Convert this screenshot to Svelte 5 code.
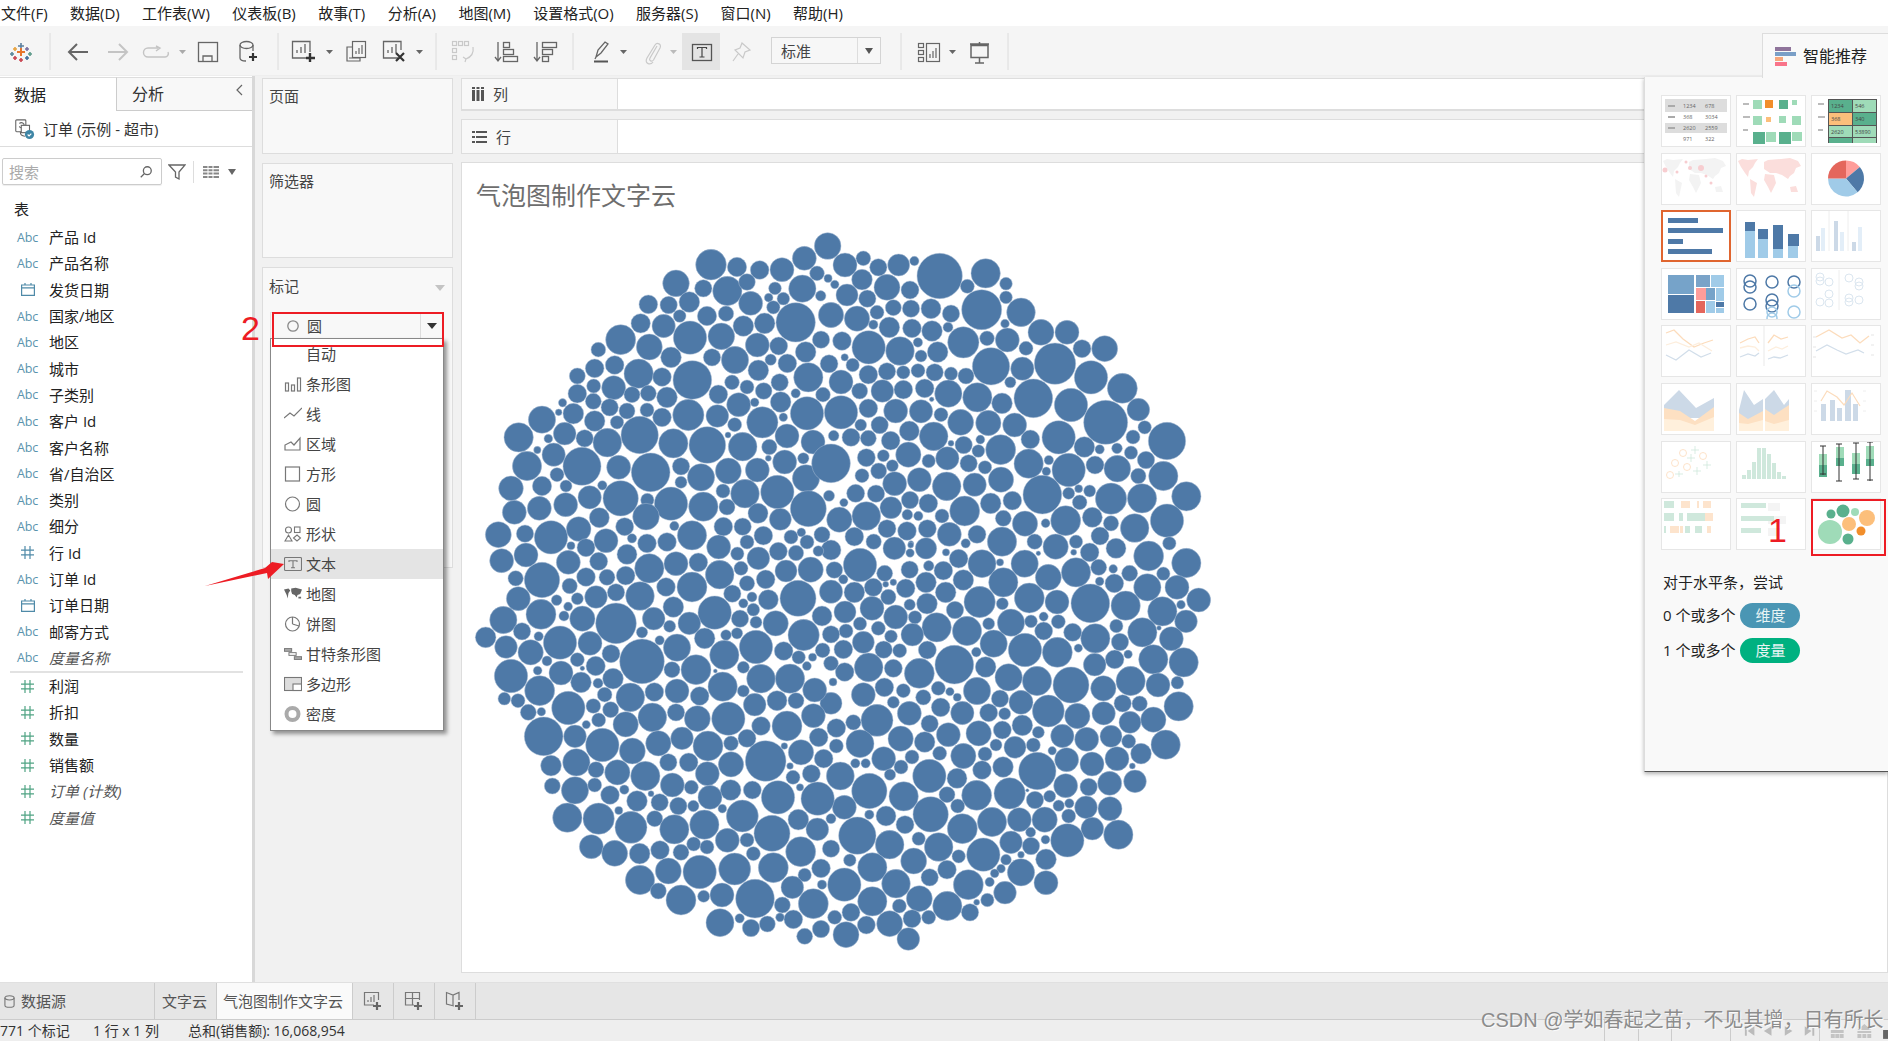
<script>
  const menus = ['文件(F)','数据(D)','工作表(W)','仪表板(B)','故事(T)','分析(A)','地图(M)','设置格式(O)','服务器(S)','窗口(N)','帮助(H)'];
  const fields = [
    ['abc','产品 Id'],['abc','产品名称'],['date','发货日期'],['abc','国家/地区'],['abc','地区'],['abc','城市'],['abc','子类别'],['abc','客户 Id'],['abc','客户名称'],['abc','省/自治区'],['abc','类别'],['abc','细分'],['num','行 Id'],['abc','订单 Id'],['date','订单日期'],['abc','邮寄方式'],['abc','度量名称',true]
  ];
  const measures = [['利润'],['折扣'],['数量'],['销售额'],['订单 (计数)',true],['度量值',true]];

  const worldA = 'M2 8L6 6L12 7L22 6L19 10L17 14L13 18L12 24L9 20L5 14Z M14 26L21 30L18 44L15 40Z M28 9L32 7L45 6L54 5L62 8L65 13L60 15L58 20L54 23L52 26L46 22L40 20L34 20L28 16Z M29 21L38 22L40 30L35 40L32 34L28 27Z M54 34L60 33L62 39L55 39Z';

  const A = [[720,134,46],[798,141,29],[866,150,28],[933,149,36],[1000,115,36],[1070,78,40],[615,190,40],[697,205,26],[769,213,44],[828,186,25],[994,206,41],[1038,160,22],[912,205,19],[937,236,19],[893,233,13],[907,262,20],[839,250,36],[532,253,28],[593,255,26],[655,246,31],[708,288,29],[765,281,23],[626,288,19],[974,307,59],[817,318,31],[881,310,31],[1050,359,26],[509,310,29],[578,318,35],[657,353,50],[751,349,40],[859,375,36],[923,378,27],[1004,396,31],[449,359,45],[535,381,39],[600,412,31],[723,412,26],[792,420,41],[382,389,22],[431,435,28],[899,419,17],[949,430,28],[371,445,28],[503,461,44],[573,471,28],[664,480,58],[783,487,22],[862,451,31],[1012,472,44],[319,468,24],[368,498,21],[428,503,36],[828,501,21],[926,487,26],[319,521,28],[367,544,24],[483,524,24],[532,520,24],[588,532,31],[742,523,28],[878,513,25],[974,520,14],[1056,524,22],[929,546,31],[803,554,36],[851,547,13],[416,562,26],[468,573,24],[528,570,21],[1008,580,50],[213,599,41],[263,577,10],[307,581,31],[371,603,31],[573,592,28],[652,585,47],[739,588,34],[874,607,47],[791,614,21],[438,607,20],[143,652,44],[281,641,34],[232,656,13],[341,655,26],[409,668,43],[506,645,56],[607,670,44],[709,675,55],[771,645,9],[948,648,36],[1026,666,36],[815,680,43],[199,690,11],[248,704,35],[895,681,23],[168,738,44],[333,739,57],[258,764,21],[443,742,36],[539,757,58],[630,739,26],[892,715,9],[997,715,17],[941,726,36],[772,753,39],[859,750,36],[690,772,41],[1005,775,41],[120,805,37],[213,798,29],[285,798,18],[394,796,14],[630,787,18],[356,832,35],[449,835,53],[756,813,21],[822,821,43],[919,816,50],[130,877,36],[205,865,36],[284,854,36],[529,840,20],[600,851,50],[697,860,44],[768,861,24],[1012,866,54],[385,893,30],[525,890,40],[861,880,30],[928,898,33]];
  const B = [[326,153,68],[464,145,44],[42,120,36],[97,100,22],[142,127,26],[203,120,33],[250,108,14],[0,62,28],[93,164,31],[168,187,39],[237,195,27],[409,184,21],[525,176,19],[525,217,19],[48,210,33],[109,221,26],[452,254,60],[570,262,43],[187,248,24],[240,251,26],[300,251,30],[360,266,26],[138,262,21],[78,281,38],[127,299,14],[0,270,38],[175,307,31],[243,310,28],[303,318,31],[351,307,15],[522,296,13],[630,322,39],[708,322,36],[33,348,28],[113,367,50],[207,378,43],[397,352,47],[468,340,22],[529,345,36],[585,370,21],[753,371,27],[821,371,39],[672,416,62],[480,424,56],[320,381,31],[270,393,18],[41,397,11],[574,431,35],[780,457,50],[874,490,45],[65,420,20],[112,449,28],[168,439,26],[217,442,20],[261,437,21],[311,442,26],[360,446,20],[405,453,24],[30,471,36],[86,498,24],[154,498,34],[217,494,28],[281,490,28],[352,506,41],[439,517,44],[513,535,31],[607,520,58],[720,540,50],[824,592,66],[922,554,34],[30,562,50],[112,550,28],[194,558,36],[270,559,35],[330,569,21],[302,523,7],[389,592,39],[472,594,38],[551,600,36],[941,607,20],[1008,648,56],[146,600,26],[60,637,27],[112,640,24],[235,618,30],[308,634,43],[179,647,28],[8,632,16],[683,637,50],[598,643,28],[906,636,21],[398,660,26],[360,655,9],[509,674,45],[442,678,19],[760,666,31],[806,673,14],[858,670,16],[900,683,20],[945,705,26],[0,715,58],[106,698,27],[157,692,18],[232,689,38],[293,708,20],[349,700,35],[413,715,26],[593,716,44],[713,735,50],[792,720,27],[859,731,40],[922,753,23],[997,753,44],[143,738,24],[184,722,18],[93,752,21],[462,727,20],[646,739,13],[191,776,36],[265,764,36],[347,784,43],[431,779,35],[510,764,38],[634,809,58],[713,805,18],[743,791,12],[776,798,18],[840,821,47],[933,820,44],[1066,814,44],[74,805,27],[135,806,26],[0,812,40],[237,825,26],[292,835,28],[479,835,31],[544,827,28],[746,832,22],[180,848,33],[106,873,43],[401,858,45],[517,880,24],[582,896,38],[704,887,45],[784,877,30],[840,895,23],[911,909,43],[1008,887,50],[25,884,38],[229,869,16],[262,873,14],[333,873,21],[168,911,27],[228,918,28],[289,911,27],[355,928,36],[438,928,27],[513,950,44],[70,935,28],[128,950,23],[611,950,23],[807,933,27],[735,950,20],[674,965,38],[855,970,30],[1015,955,20],[190,970,34],[285,970,32],[404,955,14],[240,955,8]];
  const C = [[82,44,39],[162,41,26],[240,52,50],[323,27,37],[386,0,28],[461,20,27],[526,8,35],[610,18,14],[663,46,44],[757,20,28],[815,20,26],[877,47,28],[930,10,35],[1015,0,40],[405,62,36],[345,83,27],[483,55,14],[528,70,28],[588,66,28],[743,81,36],[828,66,21],[960,51,21],[991,37,13],[1008,66,21],[1053,44,24],[92,122,36],[165,105,36],[292,127,36],[383,124,27],[468,103,30],[535,145,44],[615,131,36],[682,127,28],[799,101,20],[862,115,34],[922,94,27],[975,99,23],[1042,93,16],[1095,88,33],[134,175,23],[213,180,53],[345,171,28],[408,172,24],[464,167,28],[746,164,43],[810,145,21],[945,153,33],[1019,149,38],[1085,148,24],[296,198,23],[585,201,28],[663,201,45],[828,190,23],[884,178,28],[142,236,36],[375,231,34],[435,217,26],[507,228,43],[784,221,26],[319,236,18],[981,235,54],[1077,217,38],[892,239,30],[843,231,15],[817,250,14],[210,283,45],[334,296,38],[607,261,31],[731,278,50],[847,269,19],[1053,288,30],[97,300,41],[435,310,61],[548,296,34],[807,296,26],[655,310,34],[855,307,18],[596,319,18],[914,310,38],[153,334,26],[998,345,47],[1077,345,27],[44,352,31],[513,337,17],[203,349,14],[267,368,50],[701,355,31],[765,345,16],[798,340,17],[105,381,34],[357,370,36],[566,361,14],[618,383,41],[855,381,50],[938,393,28],[179,397,38],[420,401,27],[760,405,44],[513,424,67],[1049,424,44],[983,412,20],[228,423,15],[319,419,21],[603,449,24],[675,449,45],[817,442,18],[120,468,50],[374,438,29],[270,459,36],[334,445,7],[733,453,6],[426,476,31],[870,476,43],[957,476,44],[330,487,31],[381,490,15],[755,500,44],[206,512,45],[401,524,22],[478,532,43],[550,516,28],[618,513,36],[686,528,28],[817,513,18],[1031,510,36],[1080,487,17],[918,542,30],[975,542,24],[100,536,19],[141,542,21],[292,564,50],[367,558,22],[851,554,34],[419,569,24],[615,577,26],[544,592,43],[679,596,39],[772,596,50],[1027,587,36],[172,577,24],[383,600,21],[464,613,38],[870,618,28],[948,618,45],[218,649,58],[312,649,34],[394,675,50],[633,655,34],[562,670,38],[828,655,27],[1043,652,28],[711,678,45],[780,670,22],[484,693,39],[884,723,61],[940,678,10],[990,697,38],[1058,716,28],[240,737,31],[316,727,41],[780,733,38],[592,727,26],[653,727,28],[375,749,24],[439,757,38],[709,761,36],[957,738,10],[523,768,44],[966,772,21],[1021,761,27],[604,795,36],[244,798,24],[312,811,41],[371,795,21],[661,802,21],[779,810,31],[844,810,27],[987,802,11],[921,832,50],[1040,836,50],[417,825,28],[460,809,14],[717,832,36],[540,821,9],[498,843,31],[566,847,26],[622,858,26],[667,858,17],[754,866,13],[814,888,48],[289,893,44],[383,896,47],[551,896,24],[982,899,31],[1080,895,17],[700,914,44],[480,922,48],[610,928,44],[903,940,54],[1039,928,34],[769,961,36],[828,960,21],[361,980,36],[431,1000,39],[506,1001,31],[567,990,28],[630,997,24],[668,972,21],[708,981,21],[847,1001,21],[989,995,45],[1076,984,31],[592,1053,39],[686,1056,50],[791,1047,48],[907,1043,45],[1001,1065,20],[1050,1045,28],[507,1080,44],[562,1113,24],[630,1140,45],[698,1129,18],[753,1125,36],[852,1136,58],[964,1102,34],[1053,1094,14],[934,1155,24],[1027,1151,45],[747,1208,42],[806,1195,14],[840,1224,26],[889,1212,24],[927,1192,13],[967,1198,28],[1050,1227,26],[1089,1192,23],[1001,1249,24]];
  const D = [[87,75,50],[190,37,43],[289,37,43],[0,30,30],[72,0,26],[127,10,24],[239,15,9],[345,37,11],[404,14,15],[355,0,30],[437,0,20],[383,56,28],[453,71,42],[513,15,45],[507,67,11],[581,71,41],[622,40,7],[611,8,27],[675,30,42],[735,8,20],[728,37,9],[776,37,28],[803,82,24],[857,40,44],[953,48,45],[1016,18,21],[1066,69,44],[10,90,25],[161,100,24],[236,89,26],[337,92,28],[397,120,31],[517,127,44],[652,112,39],[735,97,44],[896,100,24],[997,101,20],[37,118,14],[850,130,28],[806,124,13],[949,142,41],[1038,142,36],[127,142,27],[70,157,31],[164,133,9],[187,127,10],[224,145,28],[285,127,31],[344,157,31],[0,155,35],[446,186,47],[595,174,45],[678,186,36],[778,190,58],[884,197,44],[1103,180,36],[172,171,23],[236,194,17],[288,191,31],[514,191,18],[994,214,44],[1050,194,13],[123,205,36],[42,216,33],[372,210,26],[194,231,36],[252,232,20],[540,248,41],[600,244,19],[682,245,21],[1065,244,34],[317,262,44],[408,273,44],[473,251,18],[87,251,20],[856,258,20],[45,273,21],[142,265,21],[638,273,27],[725,277,27],[793,295,44],[934,277,44],[984,264,7],[0,283,26],[244,284,34],[180,289,19],[1021,296,36],[97,307,33],[488,311,41],[582,330,50],[679,337,45],[867,306,26],[37,328,28],[158,329,26],[206,332,21],[289,330,27],[370,374,58],[851,358,28],[967,358,44],[1058,367,44],[791,374,34],[113,382,43],[187,385,27],[265,400,45],[464,381,31],[41,396,28],[0,370,22],[533,412,41],[618,423,44],[720,435,54],[899,423,44],[817,445,38],[981,435,36],[1039,428,19],[160,442,28],[217,452,21],[322,445,21],[438,453,41],[6,426,12],[97,464,36],[277,472,23],[507,476,26],[570,487,36],[875,490,26],[926,491,23],[1043,499,44],[0,490,33],[187,487,18],[329,502,28],[652,513,48],[394,519,35],[473,518,27],[521,521,18],[739,528,38],[818,520,35],[138,541,48],[235,520,36],[67,547,23],[897,547,33],[967,539,38],[296,551,26],[574,556,31],[16,564,28],[514,570,27],[352,584,36],[443,580,38],[622,577,18],[694,588,35],[767,598,36],[840,589,33],[893,604,21],[1004,614,44],[87,611,42],[209,596,38],[281,606,31],[495,615,18],[552,622,33],[607,615,21],[16,618,21],[930,641,31],[326,640,21],[397,648,38],[462,642,21],[158,656,36],[243,651,21],[707,659,36],[783,672,36],[858,656,36],[73,670,14],[104,670,14],[210,681,21],[516,681,31],[453,690,28],[619,693,56],[295,708,50],[177,704,17],[904,678,9],[28,708,42],[378,715,30],[912,724,34],[836,730,36],[115,753,53],[704,737,36],[773,741,26],[218,769,44],[348,764,24],[437,766,45],[536,760,47],[589,751,5],[612,780,26],[656,769,18],[40,802,36],[765,802,34],[837,806,36],[683,797,17],[715,790,14],[380,798,21],[299,823,53],[115,824,14],[165,828,30],[0,836,15],[713,828,21],[565,839,36],[641,839,38],[394,866,45],[483,846,44],[222,854,27],[79,887,56],[599,877,15],[784,866,34],[862,884,44],[709,901,50],[176,914,43],[263,896,20],[323,921,43],[457,944,50],[540,907,34],[600,918,26],[0,926,26],[248,963,39],[383,949,20],[570,944,10],[124,982,44],[645,958,31],[525,959,16],[348,989,28],[510,986,13],[491,1000,13],[570,997,41],[40,1034,50],[195,1031,43],[296,1012,26],[412,1034,45],[476,1026,14],[645,1028,36],[522,1058,34],[124,1084,44],[265,1076,39],[205,1098,21],[349,1098,44],[437,1087,9],[469,1080,20],[417,1117,26],[60,1117,27],[11,1132,21],[293,1132,21],[243,1136,27],[176,1151,39],[106,1155,27],[45,1184,39],[232,1197,34]];

  const bubbles = [];
  function add(list, ox, oy) {
    for (const [x, y, r] of list) {
      const c = { x: ox + x / 3, y: oy + y / 3, r: r / 3 };
      let ok = true;
      for (const b of bubbles) {
        if (Math.hypot(b.x - c.x, b.y - c.y) < b.r + c.r - 4) { ok = false; break; }
      }
      if (ok) bubbles.push(c);
    }
  }
  add(A, 470, 220); add(B, 830, 225); add(D, 830, 540); add(C, 470, 520);
  let seed = 771;
  const rnd = () => { seed = (seed + 0x6d2b79f5) | 0; let t = Math.imul(seed ^ (seed >>> 15), 1 | seed); t = (t + Math.imul(t ^ (t >>> 7), 61 | t)) ^ t; return ((t ^ (t >>> 14)) >>> 0) / 4294967296; };
  for (let i = 0; i < 9000; i++) {
    const a = rnd() * Math.PI * 2, d = Math.sqrt(rnd()) * 340;
    const x = 842 + Math.cos(a) * d, y = 592 + Math.sin(a) * d;
    let free = 99;
    for (const b of bubbles) { free = Math.min(free, Math.hypot(b.x - x, b.y - y) - b.r - 0.8); if (free < 4) break; }
    if (free >= 4) bubbles.push({ x, y, r: Math.min(free, 14) });
  }
</script>

<div class="app">
  <nav class="menu">{#each menus as m}<span>{m}</span>{/each}</nav>

  <div class="toolbar">
    <svg class="strip1" viewBox="0 26 771 50" width="771" height="50" fill="none">
      <g stroke-width="1.6">
        <path d="M21 43v6M18 46h6" stroke="#5a7f9f"/><path d="M15 47v4M13 49h4" stroke="#e8a23d"/><path d="M27 47v4M25 49h4" stroke="#7a6fa0"/>
        <path d="M21 48v8M17 52h8" stroke="#e8762d" stroke-width="2"/>
        <path d="M12 52v4M10 54h4" stroke="#59879b"/><path d="M30 52v4M28 54h4" stroke="#5d9a8a"/>
        <path d="M15 56v4M13 58h4" stroke="#c9434f"/><path d="M27 56v4M25 58h4" stroke="#3f6f9d"/><path d="M21 58v4M19 60h4" stroke="#c9434f"/>
      </g>
      <path d="M50 33v37M278 33v37M436 33v37M573 33v37" stroke="#dcdcdc"/>
      <path d="M88 52H69M77 44l-8 8 8 8" stroke="#666" stroke-width="2"/>
      <path d="M108 52h19M119 44l8 8-8 8" stroke="#c4c4c4" stroke-width="2"/>
      <path d="M158 48h-10a3.500 3.500 0 0 0 0 9h17a3.500 3.500 0 0 0 3-5M156 46l4 2-4 3" stroke="#c4c4c4" stroke-width="1.400"/>
      <path d="M179 50h7l-3.500 4z" fill="#aaa"/>
      <rect x="198.500" y="42.500" width="19" height="19" stroke="#666" stroke-width="1.300"/><path d="M203 61v-5h9v5" stroke="#666" stroke-width="1.300"/>
      <path d="M240 45v13c0 2 2 3 6 3M253 45v6" stroke="#666" stroke-width="1.300"/><ellipse cx="246.500" cy="45" rx="6.500" ry="3.500" stroke="#666" stroke-width="1.300"/><path d="M253 53v8M249 57h8" stroke="#333" stroke-width="2.200"/>
      <path d="M307 58H292.500V41.500H310V52" stroke="#666" stroke-width="1.300"/><path d="M297 53v-3M301 53v-6M305 53v-9" stroke="#666" stroke-width="1.300"/><path d="M310 53v9M306 58h9" stroke="#333" stroke-width="2.400"/>
      <path d="M326 50h7l-3.500 4z" fill="#666"/>
      <rect x="352.500" y="41.500" width="13" height="16" stroke="#666" stroke-width="1.200" fill="#f5f5f5"/><path d="M356 54v-3M359 54v-6M362 54v-9" stroke="#666" stroke-width="1.200"/><path d="M352 47h-5v14h13v-3M349 58h11" stroke="#666" stroke-width="1.200"/>
      <path d="M398 58H383.500V41.500H401V50" stroke="#666" stroke-width="1.300"/><path d="M388 53v-3M392 53v-6M396 53v-9" stroke="#666" stroke-width="1.300"/><path d="M396 53l8 8M404 53l-8 8" stroke="#333" stroke-width="2.200"/>
      <path d="M416 50h7l-3.500 4z" fill="#666"/>
      <g stroke="#c9c9c9" stroke-width="1.200"><rect x="452.500" y="41.500" width="4" height="4"/><rect x="458.500" y="41.500" width="4" height="4"/><rect x="464.500" y="41.500" width="4" height="4"/><rect x="452.500" y="48.500" width="4" height="4"/><rect x="452.500" y="55.500" width="4" height="4"/><path d="M473 47c1 6-2 10-7 12M463 57l3 2-1 3"/></g>
      <path d="M498 42v19M495 57l3 4 3-4" stroke="#666" stroke-width="1.300"/><g stroke="#666" stroke-width="1.300"><rect x="503.500" y="42.500" width="6" height="5"/><rect x="503.500" y="49.500" width="10" height="5"/><rect x="503.500" y="56.500" width="14" height="5"/></g>
      <path d="M537 42v19M534 57l3 4 3-4" stroke="#666" stroke-width="1.300"/><g stroke="#666" stroke-width="1.300"><rect x="542.500" y="42.500" width="14" height="5"/><rect x="542.500" y="49.500" width="10" height="5"/><rect x="542.500" y="56.500" width="6" height="5"/></g>
      <path d="M596 57l2-7 7-8 3 2-7 9zM596 57l-1 2" stroke="#666" stroke-width="1.300"/><path d="M594 61.500h14" stroke="#555" stroke-width="2"/>
      <path d="M620 50h7l-3.500 4z" fill="#666"/>
      <path d="M657 46L650 58c-1.500 3 2 4 3.500 2L660 48c2-4-3-6-5-3L647 58c-3 5 3 8 6 4" stroke="#c9c9c9" stroke-width="1.200"/>
      <path d="M670 50h7l-3.500 4z" fill="#bbb"/>
      <rect x="682" y="33" width="38" height="37" fill="#e4e4e4"/>
      <rect x="692.500" y="44.500" width="19" height="16" stroke="#555" stroke-width="1.300"/>
      <path d="M697.500 49v-1.500h9V49M702 48v9M699.500 57h5" stroke="#444" stroke-width="1.200"/>
      <path d="M742 43l8 7-5 2-2 6-8-8 5-2zM738 54l-5 7" stroke="#c9c9c9" stroke-width="1.200"/>
    </svg>
    <div class="fit"><span>标准</span><i></i></div>
    <svg class="strip2" viewBox="881 26 140 50" width="140" height="50" fill="none">
      <path d="M901 33v37M1008 33v37" stroke="#dcdcdc"/>
      <g stroke="#666" stroke-width="1.200"><rect x="918.500" y="43.500" width="5" height="4"/><rect x="918.500" y="50.500" width="5" height="4"/><rect x="918.500" y="57.500" width="5" height="4"/><rect x="926.500" y="43.500" width="13" height="18"/><path d="M930 58v-4M933 58v-7M936 58v-10"/></g>
      <path d="M949 50h7l-3.500 4z" fill="#666"/>
      <path d="M970 44h19M971 45.500h17v12h-17zM979.500 42v2M979.500 57.500v5M975 63h9" stroke="#666" stroke-width="1.500"/>
    </svg>
  </div>

  <main class="main">
    <section class="data">
      <div class="dtabs"><span class="on">数据</span><span class="off">分析<svg viewBox="0 0 8 12" width="8" height="12" fill="none" stroke="#666" stroke-width="1.200"><path d="M7 1L2 6l5 5"/></svg></span></div>
      <div class="source">
        <svg viewBox="0 0 24 24" width="22" height="22" fill="none" stroke="#666" stroke-width="1.200"><rect x="3" y="2" width="11" height="13" rx="1"/><path d="M7 6a3 3 0 0 1 5 3c0 3-5 2-5 0M8 15c0 4 2 4 5 5"/><rect x="9" y="8" width="9" height="8" fill="#fff"/><circle cx="18" cy="18" r="5" fill="#3f86a6" stroke="none"/><path d="M16 18l1.500 1.500L20 17" stroke="#fff"/></svg>
        <span>订单 (示例 - 超市)</span>
      </div>
      <div class="searchrow">
        <div class="search"><span>搜索</span>
          <svg viewBox="0 0 16 16" width="14" height="14" fill="none" stroke="#666" stroke-width="1.500"><circle cx="9.500" cy="6.500" r="4.500"/><path d="M6 10l-4 4"/></svg>
        </div>
        <svg class="filt" viewBox="0 0 18 18" width="18" height="18" fill="none" stroke="#666" stroke-width="1.300"><path d="M1 2h16L11 9v7L7.500 14V9z"/></svg>
        <span class="vsep"></span>
        <svg class="gridic" viewBox="0 0 16 12" width="16" height="12" fill="#888"><path d="M0 0h16v2H0zM0 3.300h16v2H0zM0 6.600h16v2H0zM0 10h16v2H0z"/><path d="M4.500 0h1v12h-1zM9.500 0h1v12h-1z" fill="#fff"/></svg>
        <span class="caret"></span>
      </div>
      <div class="tbl">表</div>
      <ul class="list">
        {#each fields as f}
          <li class:cal={f[2]}>
            <span class="ic">
              {#if f[0] === 'abc'}<em>Abc</em>
              {:else if f[0] === 'date'}<svg viewBox="0 0 14 13" width="14" height="13" fill="none" stroke="#4f8aa8" stroke-width="1.200"><path d="M.6 2h12.800v10.400H.6zM.6 4.800h12.800M4 0v2.500M10 0v2.500"/></svg>
              {:else}<svg viewBox="0 0 13 13" width="13" height="13" fill="none" stroke="#4f8aa8" stroke-width="1.200"><path d="M4 0v13M9 0v13M0 4.200h13M0 8.800h13"/></svg>{/if}
            </span>
            <span>{f[1]}</span>
          </li>
        {/each}
      </ul>
      <div class="hsep"></div>
      <ul class="list">
        {#each measures as m}
          <li class:cal={m[1]}>
            <span class="ic"><svg viewBox="0 0 13 13" width="13" height="13" fill="none" stroke="#4fa383" stroke-width="1.200"><path d="M4 0v13M9 0v13M0 4.200h13M0 8.800h13"/></svg></span>
            <span>{m[0]}</span>
          </li>
        {/each}
      </ul>
    </section>

    <section class="cards">
      <div class="card pages">页面</div>
      <div class="card filters">筛选器</div>
      <div class="card marks">
        <div class="mhead">标记<span class="mcaret"></span></div>
        <div class="select">
          <svg viewBox="0 0 14 14" width="14" height="14" fill="none" stroke="#888" stroke-width="1.300"><circle cx="7" cy="7" r="5.200"/></svg>
          <span>圆</span>
          <i></i>
        </div>
        <div class="dd">
          <div class="it"><span class="mi"></span>自动</div>
          <div class="it"><svg class="mi" viewBox="0 0 18 14" fill="none" stroke="#777" stroke-width="1.200"><rect x="1.500" y="6" width="3" height="8"/><rect x="7.500" y="8" width="3" height="6"/><rect x="13.500" y="1" width="3" height="13"/></svg>条形图</div>
          <div class="it"><svg class="mi" viewBox="0 0 18 14" fill="none" stroke="#777" stroke-width="1.200"><path d="M0 11l6-5 4 3 8-8"/></svg>线</div>
          <div class="it"><svg class="mi" viewBox="0 0 18 14" fill="none" stroke="#777" stroke-width="1.200"><path d="M1 13V8l6-3 3 3 6-7v12z"/></svg>区域</div>
          <div class="it"><svg class="mi" viewBox="0 0 18 16" fill="none" stroke="#777" stroke-width="1.200"><rect x="1.500" y="1" width="14" height="14"/></svg>方形</div>
          <div class="it"><svg class="mi" viewBox="0 0 18 16" fill="none" stroke="#777" stroke-width="1.200"><circle cx="8.500" cy="8" r="7"/></svg>圆</div>
          <div class="it"><svg class="mi" viewBox="0 0 18 16" fill="none" stroke="#777" stroke-width="1.100"><circle cx="4.500" cy="4" r="3"/><rect x="10.500" y="1" width="5.500" height="5.500"/><path d="M1 15l3.500-6 3.500 6zM13 9l3.500 3-3.500 3-3.500-3z"/></svg>形状</div>
          <div class="it hov"><svg class="mi" viewBox="0 0 18 14" fill="none" stroke="#777" stroke-width="1.100"><rect x=".5" y=".5" width="17" height="13" rx="1"/><path d="M5 5V3.700h8V5M9 3.700v7M7 10.700h4"/></svg>文本</div>
          <div class="it"><svg class="mi" viewBox="0 0 20 14" fill="#666"><path d="M0 2l5-1 2 2-2 3-1 6-1-4zM8 1l5-1 7 2-2 5-3 1-1 3-2-3-3-1-1-3zM16 10h3v2h-3z"/></svg>地图</div>
          <div class="it"><svg class="mi" viewBox="0 0 18 16" fill="none" stroke="#777" stroke-width="1.200"><circle cx="8.500" cy="8" r="7"/><path d="M8.500 8V1M8.500 8l6.500 2"/></svg>饼图</div>
          <div class="it"><svg class="mi" viewBox="0 0 20 14" fill="none" stroke="#777" stroke-width="1.100"><rect x=".5" y="1" width="8" height="3" fill="#aaa"/><rect x="5.500" y="5.500" width="8" height="3"/><rect x="11.500" y="10" width="8" height="3" fill="#aaa"/></svg>甘特条形图</div>
          <div class="it"><svg class="mi" viewBox="0 0 18 14" fill="#ddd" stroke="#777" stroke-width="1.100"><rect x=".5" y=".5" width="17" height="13"/><rect x="9" y="7" width="8.500" height="6.500" fill="#fff"/></svg>多边形</div>
          <div class="it"><svg class="mi" viewBox="0 0 18 16" fill="none"><circle cx="8.500" cy="8" r="6" stroke="#aaa" stroke-width="4"/></svg>密度</div>
        </div>
      </div>
    </section>

    <section class="work">
      <div class="shelf col">
        <div class="slabel"><svg viewBox="0 0 12 14" width="12" height="14" fill="#555"><path d="M0 0h3v2H0zM4.500 0h3v2h-3zM9 0h3v2H9zM0 3h3v11H0zM4.500 3h3v11h-3zM9 3h3v11H9z"/></svg>列</div>
      </div>
      <div class="shelf row">
        <div class="slabel"><svg viewBox="0 0 15 12" width="15" height="12" fill="#555"><path d="M0 0h3v2H0zM4 0h11v2H4zM0 5h3v2H0zM4 5h11v2H4zM0 10h3v2H0zM4 10h11v2H4z"/></svg>行</div>
      </div>
      <div class="viz">
        <h1>气泡图制作文字云</h1>
        <svg class="plot" viewBox="461 212 1427 758" width="1427" height="758">
          {#each bubbles as b}<circle cx={b.x} cy={b.y} r={b.r} fill="#4e79a7" stroke="#a9bdd4" stroke-width=".5" />{/each}
        </svg>
      </div>
    </section>
  </main>

  <div class="tabs">
    <div class="tsrc"><svg viewBox="0 0 12 14" width="11" height="13" fill="none" stroke="#777" stroke-width="1.200"><ellipse cx="6" cy="3" rx="5" ry="2.300"/><path d="M1 3v8c0 1.500 2 2.300 5 2.300s5-.8 5-2.300V3"/></svg>数据源</div>
    <div class="tab">文字云</div>
    <div class="tab active">气泡图制作文字云</div>
    <div class="tbtn"><svg viewBox="0 0 20 20" width="20" height="20" fill="none" stroke="#777" stroke-width="1.200"><path d="M11 14H1.500V1.500h14V9M5 11V9M8 11V6M11 11V4"/><path d="M14 11v8M10 15h8" stroke="#666" stroke-width="2.200"/></svg></div>
    <div class="tbtn"><svg viewBox="0 0 20 20" width="20" height="20" fill="none" stroke="#777" stroke-width="1.200"><path d="M10 14H1.500V1.500h14V9M1.500 7.500h14M8.500 1.500V14"/><path d="M14 11v8M10 15h8" stroke="#666" stroke-width="2.200"/></svg></div>
    <div class="tbtn"><svg viewBox="0 0 20 20" width="20" height="20" fill="none" stroke="#777" stroke-width="1.200"><path d="M9 15L1.500 13V1.500L8 4l6-2.500V9M8 4v10"/><path d="M14 11v8M10 15h8" stroke="#666" stroke-width="2.200"/></svg></div>
  </div>

  <footer class="status">
    <span class="s1">771 个标记</span>
    <span class="s2">1 行 x 1 列</span>
    <span class="s3">总和(销售额): 16,068,954</span>
    <div class="sright">
      <i class="c34"></i><i class="c33"></i><i class="c59"></i>
      <i class="c89"><svg viewBox="0 0 80 14" width="80" height="14" fill="#bbb"><path d="M2 2h2v10H2zM12 2v10L5 7zM30 2v10l-8-5zM44 2l8 5-8 5zM65 2l7 5-7 5zM73 2h2v10h-2z"/></svg></i>
      <i class="c69"><svg viewBox="0 0 69 16" width="69" height="16" fill="#c4c4c4"><path d="M11 7h13v3H11zM11 11h4v4h-4zM15.500 11h4v4h-4zM20 11h4v4h-4zM38 7l7-6 7 6zM38 8h14v2H38zM38 11h4v4h-4zM43 11h4v4h-4zM48 11h4v4h-4z"/><path d="M64 7h5v9h-5z" fill="#666"/></svg></i>
    </div>
  </footer>

  <aside class="rtab">
    <svg viewBox="0 0 21 19" width="21" height="19"><rect width="16" height="4" fill="#8f749b"/><rect y="5" width="21" height="4" fill="#7a9fc7"/><rect y="10" width="8" height="4" fill="#f6a67c"/><rect y="15" width="12" height="4" fill="#f9748a"/></svg>
    智能推荐
  </aside>
  <aside class="rpanel">
    <div class="grid">
      <svg class="t" viewBox="0 0 70 52"><rect x="4" y="4" width="62" height="13" fill="#ddd"/><rect x="4" y="28" width="62" height="10" fill="#ddd"/><g fill="#aaa"><rect x="7" y="10" width="7" height="2"/><rect x="7" y="21" width="7" height="2"/><rect x="7" y="32" width="7" height="2"/></g><g fill="#666" font-size="5.500" font-family="Open Sans"><text x="22" y="13">1234</text><text x="44" y="13">678</text><text x="22" y="24">368</text><text x="44" y="24">3034</text><text x="22" y="35">2620</text><text x="44" y="35">2559</text><text x="22" y="46">971</text><text x="44" y="46">322</text></g></svg>
      <svg class="t" viewBox="0 0 70 52"><g fill="#bbb"><rect x="7" y="8" width="6" height="2"/><rect x="7" y="21" width="7" height="2"/><rect x="7" y="34" width="5" height="2"/></g><g fill="#9fdbb8"><rect x="17" y="5" width="9" height="9"/><rect x="56" y="5" width="5" height="5"/><rect x="17" y="21" width="9" height="9"/><rect x="43" y="21" width="7" height="7"/><rect x="56" y="21" width="9" height="9"/><rect x="30" y="37" width="10" height="10"/><rect x="56" y="37" width="10" height="9"/></g><g fill="#59b08d"><rect x="43" y="5" width="9" height="9"/><rect x="17" y="37" width="12" height="12"/><rect x="43" y="37" width="12" height="12"/></g><rect x="29" y="5" width="8" height="8" fill="#f28e2b"/><rect x="30" y="22" width="5" height="5" fill="#fcbf7b"/></svg>
      <svg class="t" viewBox="0 0 70 52"><g fill="#bbb"><rect x="7" y="8" width="6" height="2"/><rect x="7" y="21" width="7" height="2"/><rect x="7" y="34" width="5" height="2"/></g><rect x="17" y="4" width="49" height="44" fill="#555"/><rect x="18" y="5" width="23" height="12" fill="#59b08d"/><rect x="42" y="5" width="23" height="12" fill="#9fdbb8"/><rect x="18" y="18" width="23" height="12" fill="#fcbf7b"/><rect x="42" y="18" width="23" height="12" fill="#59b08d"/><rect x="18" y="31" width="23" height="11" fill="#9fdbb8"/><rect x="42" y="31" width="23" height="11" fill="#9fdbb8"/><rect x="18" y="43" width="23" height="5" fill="#59b08d"/><rect x="42" y="43" width="23" height="5" fill="#9fdbb8"/><g fill="#444" font-size="5.500" font-family="Open Sans"><text x="20" y="13">1234</text><text x="44" y="13">546</text><text x="20" y="26">368</text><text x="44" y="26">340</text><text x="20" y="39">2620</text><text x="44" y="39">53890</text></g></svg>
      <svg class="t" viewBox="0 0 70 52"><path d={worldA} fill="#f3f3f3"/><g fill="#f7cdd0"><circle cx="4" cy="17" r="2.500"/><circle cx="16" cy="19" r="1.500"/><circle cx="29" cy="15" r="2"/><circle cx="40" cy="15" r="3"/><circle cx="45" cy="23" r="1.500"/><circle cx="50" cy="30" r="1.500"/><circle cx="25" cy="9" r="1.500"/></g></svg>
      <svg class="t" viewBox="0 0 70 52"><path d={worldA} fill="#fbdedc"/></svg>
      <svg class="t" viewBox="0 0 70 52"><path d="M35 25.500V7.500A18 18 0 0 1 48.800 13.900z" fill="#ff9d9a"/><path d="M35 25.500L48.800 13.900A18 18 0 0 1 46.600 39.300z" fill="#4e79a7"/><path d="M35 25.500L46.600 39.300A18 18 0 0 1 17 25.500z" fill="#a0cbe8"/><path d="M35 25.500H17A18 18 0 0 1 35 7.500z" fill="#e4665c"/></svg>

      <svg class="t sel" viewBox="0 0 70 52"><g fill="#4e79a7"><rect x="7" y="8" width="30" height="5"/><rect x="7" y="18" width="55" height="5"/><rect x="7" y="29" width="15" height="5"/><rect x="7" y="39" width="44" height="5"/></g></svg>
      <svg class="t" viewBox="0 0 70 52"><g fill="#a0cbe8"><rect x="9" y="21" width="10" height="27"/><rect x="22" y="29" width="10" height="19"/><rect x="37" y="39" width="10" height="9"/><rect x="52" y="36" width="10" height="12"/></g><g fill="#4e79a7"><rect x="9" y="12" width="10" height="9"/><rect x="22" y="19" width="10" height="10"/><rect x="37" y="15" width="10" height="24"/><rect x="52" y="24" width="11" height="12"/></g></svg>
      <svg class="t" viewBox="0 0 70 52"><path d="M18 1v40M37 1v40" stroke="#eee"/><g fill="#ccd9e7"><rect x="5" y="26" width="4" height="15"/><rect x="23" y="11" width="4" height="30"/><rect x="41" y="32" width="4" height="9"/></g><g fill="#e3eef8"><rect x="10" y="18" width="4" height="23"/><rect x="29" y="22" width="4" height="19"/><rect x="47" y="17" width="4" height="24"/></g></svg>
      <svg class="t" viewBox="0 0 70 52"><rect x="7" y="7" width="26" height="19" fill="#76a3c9"/><rect x="7" y="27" width="26" height="18" fill="#4e79a7"/><rect x="35" y="7" width="14" height="12" fill="#7aa3c8"/><rect x="50" y="7" width="13" height="12" fill="#a0cbe8"/><rect x="35" y="20" width="10" height="12" fill="#ff9d9a"/><rect x="45" y="20" width="9" height="12" fill="#76a3c9"/><rect x="55" y="20" width="8" height="13" fill="#a0cbe8"/><rect x="35" y="33" width="9" height="12" fill="#e4665c"/><rect x="45" y="33" width="9" height="12" fill="#a0cbe8"/><rect x="55" y="34" width="8" height="5" fill="#4e79a7"/><rect x="55" y="40" width="8" height="5" fill="#a0cbe8"/></svg>
      <svg class="t" viewBox="0 0 70 52" fill="none" stroke-width="1.500"><g stroke="#4e79a7"><circle cx="14" cy="13" r="6"/><circle cx="14" cy="19" r="6"/><circle cx="36" cy="14" r="6"/><circle cx="58" cy="14" r="6"/><circle cx="14" cy="36" r="6"/><circle cx="36" cy="32" r="6"/><circle cx="36" cy="38" r="6"/></g><g stroke="#a0cbe8"><circle cx="58" cy="23" r="6"/><circle cx="36" cy="44" r="5"/><circle cx="36" cy="50" r="5"/><circle cx="58" cy="44" r="6"/></g></svg>
      <svg class="t" viewBox="0 0 70 52" fill="none" stroke="#dbe6f0"><path d="M28 2v40" stroke="#eee"/><circle cx="9" cy="9" r="4"/><circle cx="9" cy="13" r="4"/><circle cx="18" cy="14" r="4"/><circle cx="38" cy="10" r="4"/><circle cx="48" cy="14" r="4"/><circle cx="48" cy="18" r="4"/><circle cx="18" cy="26" r="4"/><circle cx="9" cy="34" r="4"/><circle cx="18" cy="35" r="4"/><circle cx="38" cy="30" r="4"/><circle cx="38" cy="34" r="4"/><circle cx="48" cy="32" r="4"/></svg>

      <svg class="t" viewBox="0 0 70 52" fill="none" stroke-width="1.300"><path d="M5 8l8-3 9 9 11 8 10-4 9-3" stroke="#fcdcbc"/><path d="M5 20l10-3 13 5 10-4 13 8" stroke="#fdeedd"/><path d="M5 30l10 5 13-10 12 7 10-4" stroke="#d2deea"/></svg>
      <svg class="t" viewBox="0 0 70 52" fill="none" stroke-width="1.300"><path d="M28 1v40" stroke="#eee"/><path d="M4 18l8-4 7-2 4 6M32 18l6-8 7 4 7-2" stroke="#fcdcbc"/><path d="M4 23l8-2 7 1 4 4M32 26l8-4 6 2 6-3" stroke="#fdeedd"/><path d="M4 32l8-3 7 2 4-3M32 34l6-2 6 1 8-3" stroke="#d2deea"/></svg>
      <svg class="t" viewBox="0 0 70 52" fill="none" stroke-width="1.300"><path d="M5 12l13-7 13 8 9-3 9 8 9-7" stroke="#fcdcbc"/><path d="M5 26l11-6 10 5 9 4 12-4 6 3" stroke="#d2deea"/><path d="M2 12h3M2 22h3M2 32h3M60 10h3M60 20h3M60 30h3" stroke="#eee"/></svg>
      <svg class="t" viewBox="0 0 70 52"><path d="M3 22L18 7l17 18 18-10v20H3z" fill="#ccd9e7"/><path d="M3 25l16 3 15 10 19-14v24H3z" fill="#fde0c2"/><path d="M3 36l16 1 15 5 19-8v14H3z" fill="#fff0dc"/></svg>
      <svg class="t" viewBox="0 0 70 52"><path d="M3 27L8 7l10 15 9-6v20H3zM29 16l9-9 10 15 5-6v20H29z" fill="#ccd9e7"/><path d="M3 30l9 6 15-8v20H3zM29 26l9 6 15-10v26H29z" fill="#fde0c2"/><path d="M3 40l9 1 15-4v11H3zM29 38l9 3 15-4v11H29z" fill="#fff0dc"/></svg>
      <svg class="t" viewBox="0 0 70 52"><g fill="#ccd9e7"><rect x="10" y="21" width="5" height="17"/><rect x="19" y="17" width="5" height="21"/><rect x="26" y="25" width="5" height="13"/><rect x="34" y="7" width="6" height="31"/><rect x="42" y="21" width="5" height="17"/></g><path d="M10 18l6-10 10 6 7 8 8-12 8 13" fill="none" stroke="#fcdcbc" stroke-width="1.200"/><path d="M3 8h3M3 18h3M3 28h3M52 8h3M52 18h3M52 28h3" stroke="#eee"/></svg>

      <svg class="t" viewBox="0 0 70 52" fill="none" stroke-width=".8"><g stroke="#fcdcbc"><circle cx="22" cy="12" r="3.500"/><circle cx="42" cy="15" r="3.500"/><circle cx="14" cy="22" r="3.500"/><circle cx="26" cy="26" r="3.500"/><circle cx="9" cy="34" r="3.500"/></g><path d="M34 5v8M30 9h8M30 13v8M26 17h8M46 20v8M42 24h8M36 26v8M32 30h8M18 30v6M14 33h8" stroke="#cfe8dc"/></svg>
      <svg class="t" viewBox="0 0 70 52"><g fill="#cfe8dc"><rect x="6" y="34" width="4" height="4"/><rect x="11" y="29" width="4" height="9"/><rect x="16" y="21" width="4" height="17"/><rect x="21" y="7" width="4" height="31"/><rect x="26" y="7" width="4" height="31"/><rect x="31" y="13" width="4" height="25"/><rect x="36" y="22" width="4" height="16"/><rect x="41" y="31" width="4" height="7"/><rect x="46" y="35" width="4" height="3"/></g></svg>
      <svg class="t" viewBox="0 0 70 52"><g fill="#9fdbb8"><rect x="8" y="13" width="8" height="11"/><rect x="25" y="6" width="8" height="11"/><rect x="41" y="12" width="8" height="11"/><rect x="55" y="5" width="8" height="13"/></g><g fill="#59b08d"><rect x="8" y="24" width="8" height="12"/><rect x="25" y="17" width="8" height="8"/><rect x="41" y="23" width="8" height="10"/><rect x="55" y="18" width="8" height="7"/></g><path d="M12 5v29M9 5h6M9 33h6M28 3v37M25 3h6M25 40h6M45 2v36M42 2h6M42 38h6M59 0v40M56 1h6M56 39h6" stroke="#333" fill="none"/></svg>

      <svg class="t" viewBox="0 0 70 52"><g fill="#cfe8dc"><rect x="3" y="3" width="10" height="7"/><rect x="3" y="15" width="10" height="8"/><rect x="18" y="15" width="4" height="8"/><rect x="26" y="15" width="20" height="8"/><rect x="3" y="28" width="2" height="7"/><rect x="24" y="28" width="5" height="7"/><rect x="34" y="28" width="7" height="7"/></g><g fill="#fde4cd"><rect x="20" y="3" width="9" height="7"/><rect x="36" y="3" width="2" height="7"/><rect x="42" y="3" width="8" height="7"/><rect x="44" y="15" width="8" height="8"/><rect x="9" y="28" width="9" height="7"/><rect x="19" y="28" width="3" height="7"/><rect x="46" y="28" width="4" height="7"/></g></svg>
      <svg class="t" viewBox="0 0 70 52"><rect x="32" y="5" width="12" height="8" fill="#f4f4f4"/><rect x="32" y="18" width="18" height="8" fill="#f4f4f4"/><rect x="32" y="30" width="12" height="8" fill="#f4f4f4"/><g fill="#cfe8dc"><rect x="5" y="5" width="25" height="5"/><rect x="5" y="18" width="33" height="5"/><rect x="5" y="30" width="20" height="5"/></g></svg>
      <svg class="t" viewBox="0 0 70 52"><circle cx="19" cy="34" r="12" fill="#9fdbb8"/><circle cx="20" cy="16" r="4.500" fill="#59b08d"/><circle cx="32" cy="13" r="6.500" fill="#59b08d"/><circle cx="44" cy="14" r="4" fill="#9fdbb8"/><circle cx="56" cy="20" r="8" fill="#fcbf7b"/><circle cx="38" cy="26" r="7" fill="#fcbf7b"/><circle cx="50" cy="33" r="4.500" fill="#f28e2b"/><circle cx="37" cy="41" r="5.500" fill="#59b08d"/></svg>
    </div>
    <div class="hint">
      <p class="first">对于水平条，尝试</p>
      <p class="hr">0 个或多个<b class="dim">维度</b></p>
      <p class="hr">1 个或多个<b class="mea">度量</b></p>
    </div>
  </aside>

  <div class="redbox b2"></div>
  <div class="redbox b1"></div>
  <span class="rednum n2">2</span>
  <span class="rednum n1">1</span>
  <svg class="arrow" viewBox="200 555 90 35" width="90" height="35"><polygon points="205,586 265,568 272,562 284,564 268,579 267,573" fill="#ed1c24"/></svg>
  <div class="wm">CSDN @学如春起之苗，不见其增，日有所长</div>
</div>

<style>
  :global(body) { margin: 0; }
  .app {
    position: relative; width: 1888px; height: 1041px; overflow: hidden;
    display: flex; flex-direction: column; background: #f1f1f1; color: #222;
    font: 15px/20px "Open Sans", "Noto Sans CJK SC", sans-serif;
  }
  ul { list-style: none; margin: 0; padding: 0; }
  p, h1 { margin: 0; }
  .menu { height: 26px; background: #fff; display: flex; gap: 22.4px; padding-left: 1px; align-items: center; font-size: 15px; white-space: nowrap; }
  .toolbar { height: 50px; background: #f5f5f5; display: flex; flex: none; border-bottom: 1px solid #eee; box-sizing: border-box; }
  .strip1, .strip2 { display: block; flex: none; }
  .fit { flex: none; width: 110px; height: 27px; margin-top: 11px; box-sizing: border-box; border: 1px solid #d4d4d4; background: #f7f7f7; display: flex; align-items: center; padding-left: 9px; position: relative; color: #444; }
  .fit i { position: absolute; right: 0; top: 0; bottom: 0; width: 22px; border-left: 1px solid #ddd; }
  .fit i::after { content: ""; position: absolute; left: 7px; top: 10px; border: 4.500px solid transparent; border-top: 6px solid #555; }

  .main { flex: 1; display: flex; min-height: 0; }
  .data { width: 252px; flex: none; background: #fff; border-right: 3px solid #d8d8d8; overflow: hidden; }
  .dtabs { display: flex; height: 34px; margin-top: 1px; font-size: 16px; }
  .dtabs span { display: flex; align-items: center; }
  .dtabs .on { width: 116px; padding-left: 14px; box-sizing: border-box; border-top: 1px solid #ddd; }
  .dtabs .off { flex: 1; padding-left: 15px; background: #f8f8f8; border-left: 1px solid #ccc; border-bottom: 1px solid #ccc; border-top: 1px solid #ddd; position: relative; color: #333; }
  .dtabs svg { position: absolute; right: 9px; top: 6px; }
  .source { height: 35px; display: flex; align-items: center; gap: 8px; padding-left: 13px; border-bottom: 1px solid #ddd; color: #333; font-size: 15px; }
  .searchrow { display: flex; height: 49px; align-items: center; position: relative; }
  .search { margin-left: 2px; width: 160px; height: 27px; box-sizing: border-box; border: 1px solid #ccc; border-radius: 2px; display: flex; align-items: center; justify-content: space-between; padding: 0 8px 0 6px; color: #aaa; box-shadow: 0 1px 1px #eee; }
  .filt { margin-left: 6px; }
  .vsep { width: 1px; height: 22px; background: #ddd; margin-left: 7px; }
  .gridic { margin-left: 9px; }
  .caret { margin-left: 9px; border: 4.500px solid transparent; border-top: 6px solid #666; margin-top: 5px; }
  .tbl { height: 28px; padding-left: 14px; line-height: 26px; }
  .list li { height: 26.3px; display: flex; align-items: center; }
  .ic { width: 49px; display: flex; justify-content: center; padding-left: 6px; box-sizing: border-box; flex: none; }
  .ic em { font: 12.500px "Open Sans", sans-serif; color: #5a93ad; letter-spacing: -.2px; }
  .cal { font-style: italic; color: #555; }
  .cal .ic em { font-style: normal; }
  .hsep { height: 2px; margin: 0 9px 0 10px; background: #e2e2e2; }

  .cards { width: 191px; margin-left: 7px; flex: none; display: flex; flex-direction: column; gap: 9px; padding-top: 2px; }
  .card { background: #f8f8f8; border: 1.500px solid #ddd; box-sizing: border-box; padding: 7px 6px; color: #444; }
  .pages { height: 76px; }
  .filters { height: 95px; }
  .marks { height: 301px; position: relative; }
  .mhead { height: 37px; padding-top: 1px; box-sizing: border-box; position: relative; }
  .mcaret { position: absolute; right: 1px; top: 10px; border: 5px solid transparent; border-top: 6px solid #c4c4c4; }
  .select { height: 26px; display: flex; align-items: center; position: relative; padding-left: 15px; gap: 7px; border: 1px solid #e4e4e4; border-bottom: none; margin: 0 2px 0 1px; color: #444; }
  .select i { position: absolute; right: 0; top: 0; bottom: 0; width: 22px; border-left: 1px solid #ddd; }
  .select i::after { content: ""; position: absolute; left: 6px; top: 10px; border: 5px solid transparent; border-top: 6px solid #333; }
  .dd { position: absolute; left: 7px; top: 69.5px; width: 174px; height: 393px; box-sizing: border-box; background: #fff; border: 1px solid #888; box-shadow: 3px 3px 4px rgba(0,0,0,.4); z-index: 2; }
  .it { height: 30px; display: flex; align-items: center; padding-left: 13px; gap: 4px; color: #444; }
  .it.hov { background: #e4e4e4; }
  .mi { width: 18px; height: 16px; flex: none; }

  .work { flex: 1; margin-left: 8px; min-width: 0; display: flex; flex-direction: column; padding-top: 2px; }
  .shelf { background: #fff; border: 1px solid #ddd; box-sizing: border-box; display: flex; }
  .col { height: 33px; border-bottom: 2px solid #ddd; }
  .row { height: 35px; margin-top: 8px; }
  .slabel { width: 156px; background: #f8f8f8; border-right: 1px solid #ddd; display: flex; align-items: center; gap: 9px; padding-left: 10px; box-sizing: border-box; color: #444; }
  .viz { margin-top: 8px; height: 811px; background: #fff; border: 1px solid #ddd; box-sizing: border-box; }
  .viz h1 { height: 49px; padding-left: 14px; font-size: 25px; font-weight: 400; line-height: 64px; color: #6e6e6e; }
  .plot { display: block; }

  .tabs { height: 37px; flex: none; background: #e6e6e6; display: flex; color: #555; border-top: 1px solid #e0e0e0; box-sizing: border-box; }
  .tsrc { width: 155px; display: flex; align-items: center; gap: 6px; padding-left: 4px; box-sizing: border-box; border-right: 1px solid #ccc; }
  .tab { display: flex; align-items: center; padding: 0 7px; box-sizing: border-box; width: 61px; }
  .tab.active { width: 136px; background: #fafafa; padding: 0 6px; border-left: 1px solid #ccc; white-space: nowrap; }
  .tbtn { width: 40px; display: flex; align-items: center; justify-content: center; border-left: 1px solid #ccc; }
  .tbtn:last-child { border-right: 1px solid #ccc; }
  .status { height: 22px; flex: none; background: #eee; border-top: 1px solid #ccc; box-sizing: border-box; display: flex; align-items: center; position: relative; font-size: 14px; color: #333; white-space: nowrap; }
  .status span { position: absolute; top: 0; line-height: 21px; }
  .s1 { left: 0; }
  .s2 { left: 93px; }
  .s3 { left: 188px; }
  .sright { margin-left: auto; display: flex; height: 100%; }
  .sright i { border-left: 1px solid #ccc; box-sizing: border-box; display: flex; align-items: center; }
  .c34 { width: 34px; } .c33 { width: 33px; } .c59 { width: 59px; }
  .c89 { width: 89px; padding-left: 12px; } .c69 { width: 69px; }

  .rtab { position: absolute; left: 1762px; top: 33px; width: 126px; height: 45px; box-sizing: border-box; background: #f9f9f9; border: 1px solid #ddd; border-right: none; border-bottom: none; display: flex; align-items: center; gap: 7px; padding-left: 12px; font-size: 16px; color: #222; z-index: 3; }
  .rpanel { position: absolute; left: 1644px; top: 77px; width: 244px; height: 695px; box-sizing: border-box; background: #f9f9f9; border-left: 1px solid #ddd; border-bottom: 1px solid #555; box-shadow: 0 2px 4px rgba(0,0,0,.3); padding: 18px 0 0 16px; z-index: 2; }
  .grid { display: grid; grid-template-columns: repeat(3, 70px); grid-auto-rows: 52px; column-gap: 5px; row-gap: 5.6px; }
  .t { display: block; width: 70px; height: 52px; box-sizing: border-box; background: #fff; outline: 1.500px solid #e6e6e6; outline-offset: -1px; }
  .t.sel { outline: 2.5px solid #e0652f; outline-offset: -2px; }
  .hint { margin: 22px 0 0 2px; }
  .hint p { height: 20px; margin-bottom: 15px; white-space: nowrap; }
  .hint .first { margin-bottom: 13px; }
  .hr { display: flex; align-items: center; }
  .hr b { font-weight: 400; width: 60px; height: 25px; border-radius: 13px; margin-left: 5px; color: #e8f4f4; display: flex; align-items: center; justify-content: center; }
  .dim { background: #4a96b4; }
  .mea { background: #00b180; }

  .redbox { position: absolute; border: 2px solid #ed1c24; box-sizing: border-box; z-index: 4; }
  .b2 { left: 272px; top: 312px; width: 172px; height: 35px; }
  .b1 { left: 1811px; top: 499px; width: 75px; height: 57px; }
  .rednum { position: absolute; font: 34px/34px "Liberation Sans", sans-serif; color: #ed1c24; z-index: 4; }
  .n2 { left: 241px; top: 311px; }
  .n1 { left: 1768px; top: 513px; }
  .arrow { position: absolute; left: 200px; top: 555px; z-index: 4; }
  .wm { position: absolute; left: 1481px; top: 1006px; font-size: 20px; line-height: 28px; color: #8c8c8c; text-shadow: 1px 1px 0 #fafafa; font-family: "Liberation Sans", "Noto Sans CJK SC", sans-serif; white-space: nowrap; z-index: 5; }
</style>
